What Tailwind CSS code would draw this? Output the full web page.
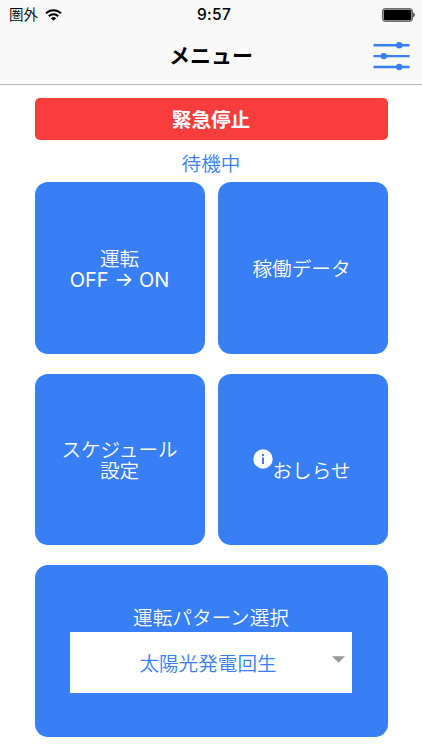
<!DOCTYPE html>
<html lang="ja">
<head>
    <meta charset="UTF-8">
    <meta name="viewport" content="width=device-width, initial-scale=1.0">
    <title>メニュー</title>
    <script src="https://cdn.jsdelivr.net/npm/@tailwindcss/browser@4"></script>
</head>
<body class="bg-white font-['Inter','Noto_Sans_CJK_JP',sans-serif]">
    <div id="app" class="h-[750px] overflow-hidden">
        <!-- Header -->
        <header class="h-[85px] bg-[#f9f9f9] border-b border-[#b9b9b9]">
            <!-- Status bar -->
            <div class="h-7 grid grid-cols-3 items-center pl-[9px] pr-[7px] text-black">
                <div class="flex items-center gap-[7px]">
                    <span class="text-[14.5px] leading-7 pt-px font-[350]">圏外</span>
                    <svg class="w-[17px] h-[12px]" viewBox="0 0 17 12" fill="none" stroke="#000" stroke-width="2">
                        <path d="M1 4.4a10.6 10.6 0 0 1 15 0"/>
                        <path d="M3.8 7.3a6.6 6.6 0 0 1 9.4 0"/>
                        <path d="M8.5 11.8 5.9 9.2a3.7 3.7 0 0 1 5.2 0z" fill="#000" stroke="none"/>
                    </svg>
                </div>
                <span class="text-center text-[15.5px] leading-7 pt-px font-medium tracking-[0.3px] pl-[4px]">9:57</span>
                <svg class="w-[33px] h-[14px] justify-self-end" viewBox="0 0 33 14">
                    <rect x=".6" y=".7" width="29.8" height="12.6" rx="2.2" fill="#999" stroke="#555" stroke-width="1"/>
                    <rect x="2" y="2.1" width="27" height="9.8" rx="1" fill="#000"/>
                    <path d="M31.4 4.8c1.6.6 1.6 3.8 0 4.4z" fill="#000"/>
                </svg>
            </div>
            <!-- Title bar -->
            <div class="h-14 grid grid-cols-[1fr_auto_1fr] items-center pl-3 pr-3">
                <h1 class="col-start-2 text-[21px] leading-14 font-bold text-black">メニュー</h1>
                <button class="justify-self-end">
                    <svg class="w-[38px] h-[30px]" viewBox="0 0 38 30" fill="#387ef5">
                        <path d="M1.5 3h36v2.4h-36zM1.5 13.9h36v2.4h-36zM1.5 24.8h36v2.4h-36z"/>
                        <circle cx="27.2" cy="4.2" r="3.2"/>
                        <circle cx="11.8" cy="15.1" r="3.2"/>
                        <circle cx="27.2" cy="26" r="3.2"/>
                    </svg>
                </button>
            </div>
        </header>

        <!-- Main Content -->
        <main class="w-[353px] mx-auto pt-[13px] text-[19.6px] leading-[21px] font-[350]">
            <button class="block w-full h-[42px] pt-[3px] rounded-[5px] bg-[#f83d3d] text-white font-bold">緊急停止</button>
            <p class="h-[42px] leading-[49px] text-center text-[#387ef5]">待機中</p>

            <div class="grid grid-cols-2 gap-x-[13px] gap-y-5 text-white">
                <button class="h-[171.5px] pt-[5px] rounded-[13px] bg-[#387ef5]">運転<br><span class="text-[20px] font-normal">OFF → ON</span></button>
                <button class="h-[171.5px] pt-[4px] pr-[2px] rounded-[13px] bg-[#387ef5]">稼働データ</button>
                <button class="h-[171.5px] pt-[3px] rounded-[13px] bg-[#387ef5]">スケジュール<br>設定</button>
                <button class="h-[171.5px] pt-[4px] pr-[2px] rounded-[13px] bg-[#387ef5] flex items-center justify-center">
                    <svg class="w-5 h-5 mb-[5px]" viewBox="0 0 20 20">
                        <circle cx="10" cy="10" r="9.7" fill="#fff"/>
                        <path d="M9 5h2v2H9zM9 8.4h2V15H9z" fill="#387ef5"/>
                    </svg>
                    <span class="mt-5">おしらせ</span>
                </button>

                <!-- Pattern select -->
                <div class="col-span-2 h-[171.5px] rounded-[13px] bg-[#387ef5] pt-[43px] px-[35.5px] text-center">
                    <p class="h-6 leading-[21px]">運転パターン選択</p>
                    <div class="relative h-[61px] bg-white text-[#387ef5] leading-[64px] pr-[6px]">
                        太陽光発電回生
                        <svg class="absolute right-[7px] top-[24px] w-[13px] h-[7px]" viewBox="0 0 14 7" fill="#999">
                            <path d="M0 0h14L7 7z"/>
                        </svg>
                    </div>
                </div>
            </div>
        </main>
    </div>
</body>
</html>
